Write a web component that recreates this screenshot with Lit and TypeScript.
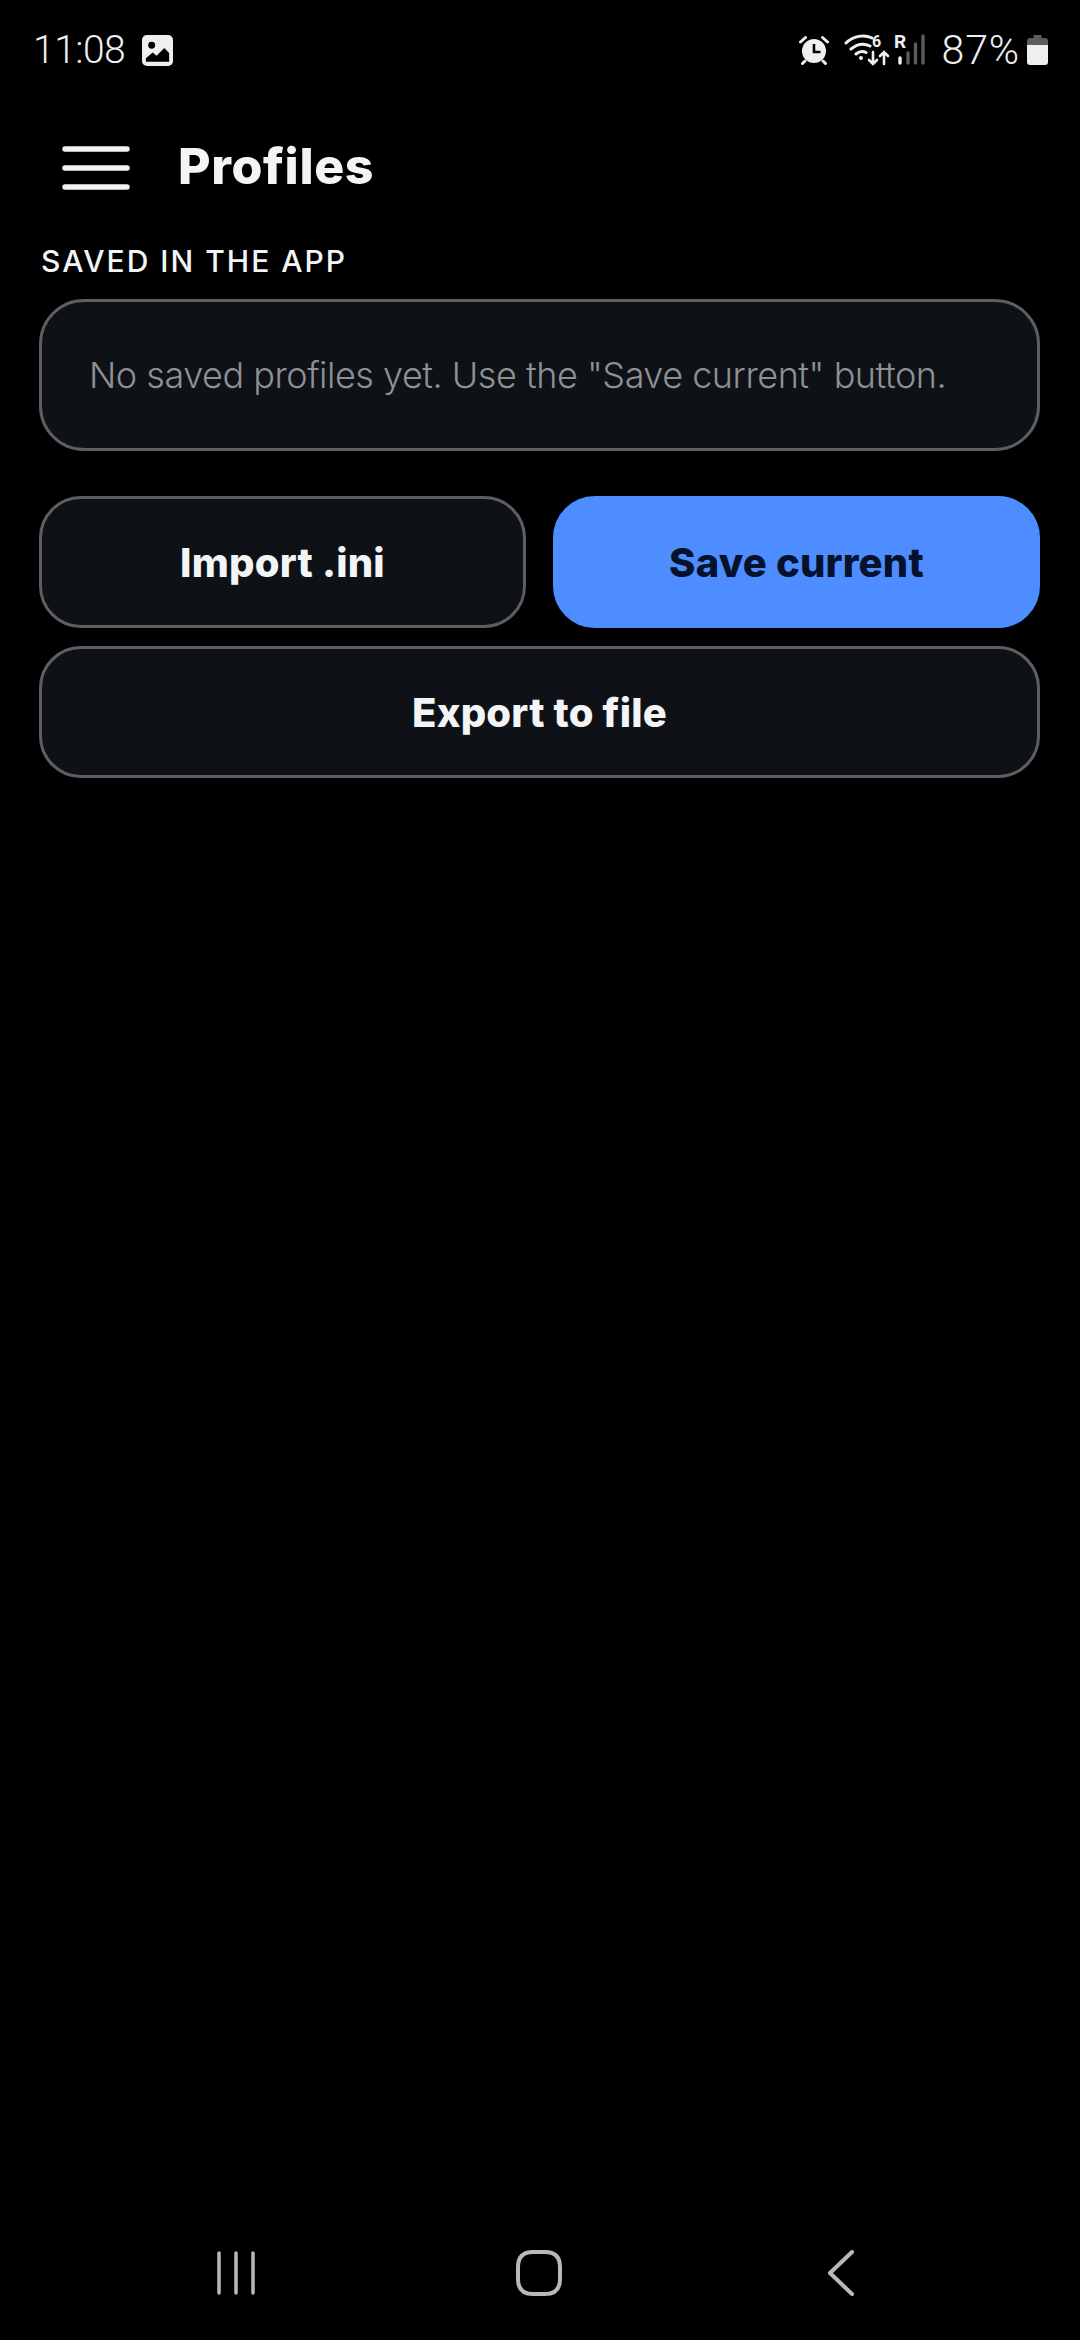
import { LitElement, html, css } from "lit";
import { customElement } from "lit/decorators.js";

@customElement("app-root")
export class AppRoot extends LitElement {
  static override styles = css`
    :host {
      display: flex;
      flex-direction: column;
      width: 1080px;
      height: 2340px;
      background: #000;
      color: #f3f4f6;
      font-family: Inter, "Noto Sans", sans-serif;
      overflow: hidden;
    }

    svg {
      display: block;
      flex: none;
    }

    /* status bar */
    .status {
      display: flex;
      align-items: center;
      height: 30px;
      padding: 35px 32px 0 33px;
      font-family: Roboto, sans-serif;
      font-weight: 300;
      font-size: 39px;
      color: #efefef;
    }

    .time {
      letter-spacing: -0.5px;
      margin-right: 17px;
    }

    .status-right {
      display: flex;
      align-items: center;
      margin-left: auto;
    }

    .alarm {
      margin-right: 15px;
    }

    .net {
      margin-right: 16px;
    }

    .pct {
      margin-right: 7px;
      font-size: 41px;
      letter-spacing: 0.9px;
    }

    /* header */
    .header {
      display: flex;
      align-items: center;
      gap: 48px;
      padding: 80px 0 0 62px;
      height: 45px;
    }

    .title {
      margin-bottom: 3px;
      font-size: 50px;
      font-weight: 800;
      letter-spacing: 0.6px;
    }

    /* content */
    .content {
      display: flex;
      flex-direction: column;
      padding: 0 40px 0 39px;
    }

    .label {
      margin: 53px 0 0 2px;
      height: 37px;
      line-height: 37px;
      font-size: 30px;
      font-weight: 500;
      letter-spacing: 2px;
      color: #f3f4f6;
    }

    .empty {
      display: flex;
      align-items: center;
      box-sizing: border-box;
      height: 152px;
      margin-top: 19px;
      padding: 0 47px;
      background: #0e1216;
      border: 3px solid #5c5e62;
      border-radius: 45px;
      font-size: 36px;
      font-weight: 300;
      letter-spacing: -0.48px;
      color: #8d9095;
      white-space: nowrap;
    }

    .row {
      display: grid;
      grid-template-columns: 487px 487px;
      justify-content: space-between;
      margin-top: 45px;
    }

    .btn {
      display: flex;
      align-items: center;
      justify-content: center;
      box-sizing: border-box;
      height: 132px;
      background: #0e1216;
      border: 3px solid #5c5e62;
      border-radius: 42px;
      font-size: 40px;
      font-weight: 800;
      letter-spacing: 0.2px;
      color: #f3f4f6;
    }

    .btn.primary {
      background: #4d8dff;
      border-color: #4d8dff;
      color: #06122b;
    }

    .btn.wide {
      margin-top: 18px;
    }

    /* nav bar */
    .nav {
      display: flex;
      align-items: center;
      margin-top: auto;
      margin-bottom: 44px;
      height: 46px;
      padding-left: 216px;
    }

    .nav-home {
      margin-left: 260px;
    }

    .nav-back {
      margin-left: 265px;
    }
  `;

  override render() {
    return html`
      <div class="status">
        <span class="time">11:08</span>
        <svg width="31" height="31" viewBox="0 0 32 32">
          <path
            fill="#efefef"
            fill-rule="evenodd"
            d="M5 0h22a5 5 0 0 1 5 5v22a5 5 0 0 1-5 5H5a5 5 0 0 1-5-5V5a5 5 0 0 1 5-5zM10 7a3.6 3.6 0 1 0 0 7.2 3.6 3.6 0 0 0 0-7.2zM4 27.5h24v-9l-5-5-8 8-4-3.5-7 6z"
          />
        </svg>
        <div class="status-right">
          <svg class="alarm" width="30" height="30" viewBox="0 0 30 30">
            <path fill="none" stroke="#efefef" stroke-width="3" stroke-linecap="round" d="M1.5 7 6.5 2.5M28.5 7 23.5 2.5M6 26 3.5 28.5M24 26 26.5 28.5" />
            <circle cx="15" cy="16" r="12" fill="#efefef" />
            <path fill="none" stroke="#000" stroke-width="2.6" d="M15 9v8h6.5" />
          </svg>
          <svg class="net" width="82" height="42" viewBox="0 -6 82 42" fill="none" stroke="#efefef" stroke-linecap="round">
            <path stroke-width="3" d="M2 8C9 1 20-1 28 3M7 14c6-5 13-6 19-3M12 19c3-2.500 7-3 10-1.500" />
            <circle cx="17" cy="23" r="2" fill="#efefef" stroke="none" />
            <text x="28" y="12" fill="#efefef" stroke="none" font-family="Roboto, sans-serif" font-size="16" font-weight="700">6</text>
            <path stroke-width="2.600" d="M29 17v12M25 25l4 4 4-4M40 29V17M36 21l4-4 4 4" />
            <text x="50" y="13" fill="#efefef" stroke="none" font-family="Roboto, sans-serif" font-size="19" font-weight="700">R</text>
            <path stroke-width="3.400" d="M56 23v5" />
            <path stroke-width="3.400" stroke="#5c5c5c" d="M64 18v10M71.500 9v19M79 1v27" />
          </svg>
          <span class="pct">87%</span>
          <svg width="21" height="30" viewBox="0 0 21 30">
            <path fill="#5c5c5c" d="M6.500 0h8v3h3.500a3 3 0 0 1 3 3v4H0V6a3 3 0 0 1 3-3h3.500z" />
            <path fill="#efefef" d="M0 10h21v17a3 3 0 0 1-3 3H3a3 3 0 0 1-3-3z" />
          </svg>
        </div>
      </div>

      <div class="header">
        <svg width="68" height="44" viewBox="0 0 68 44" fill="none" stroke="#f3f4f6" stroke-width="5.500" stroke-linecap="round">
          <path d="M3 3h62M3 22h62M3 41h62" />
        </svg>
        <span class="title">Profiles</span>
      </div>

      <div class="content">
        <div class="label">SAVED IN THE APP</div>
        <div class="empty">No saved profiles yet. Use the "Save current" button.</div>
        <div class="row">
          <div class="btn">Import .ini</div>
          <div class="btn primary">Save current</div>
        </div>
        <div class="btn wide">Export to file</div>
      </div>

      <div class="nav">
        <svg width="40" height="44" viewBox="0 0 40 44" fill="none" stroke="#b9b9b9" stroke-width="3.500" stroke-linecap="round">
          <path d="M3 2v40M20 2v40M37 2v40" />
        </svg>
        <svg class="nav-home" width="46" height="46" viewBox="0 0 46 46" fill="none" stroke="#b9b9b9" stroke-width="4">
          <path d="M17 2h12c10 0 15 5 15 15v12c0 10-5 15-15 15H17C7 44 2 39 2 29V17C2 7 7 2 17 2z" />
        </svg>
        <svg class="nav-back" width="28" height="46" viewBox="0 0 28 46" fill="none" stroke="#b9b9b9" stroke-width="4" stroke-linecap="round" stroke-linejoin="round">
          <path d="M25 2 3 23l22 21" />
        </svg>
      </div>
    `;
  }
}

declare global {
  interface HTMLElementTagNameMap {
    "app-root": AppRoot;
  }
}
